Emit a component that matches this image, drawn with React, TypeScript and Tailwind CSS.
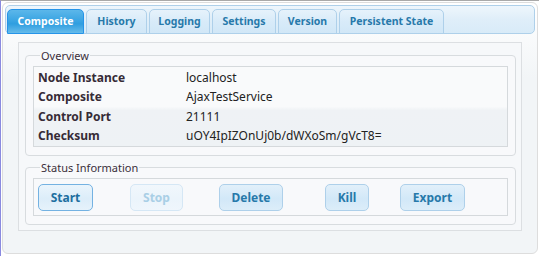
import React from "react";

const tabs = [
  { label: "Composite", w: "w-[77px]", active: true },
  { label: "History", w: "w-[61px]" },
  { label: "Logging", w: "w-[61px]" },
  { label: "Settings", w: "w-[64px]" },
  { label: "Version", w: "w-[59px]" },
  { label: "Persistent State", w: "w-[105px]" },
];

const rows = [
  ["Node Instance", "localhost"],
  ["Composite", "AjaxTestService"],
  ["Control Port", "21111"],
  ["Checksum", "uOY4IpIZOnUj0b/dWXoSm/gVcT8="],
];

function Btn({ label, cls, variant }: { label: string; cls: string; variant?: "focus" | "disabled" }) {
  const base =
    "h-[27px] rounded-[5px] border text-[12px] font-bold flex items-center justify-center shrink-0";
  const style =
    variant === "focus"
      ? "border-[#74b2e2] bg-[linear-gradient(#eaf4fc,#dcedf9_55%,#e6f2fb)] text-[#1d6fa0]"
      : variant === "disabled"
      ? "border-[#d5e7f5] bg-[linear-gradient(#f1f7fc,#ebf4fb_55%,#eff6fc)] text-[#a9cfe6]"
      : "border-[#aed0ea] bg-[linear-gradient(#e2f0fa,#d2e8f8_55%,#dcedf9)] text-[#2779aa]";
  return <div className={`${base} ${style} ${cls}`}>{label}</div>;
}

export default function App() {
  return (
    <div
      className="w-[539px] h-[256px] bg-white border-t border-t-[#a9a9a9] border-l border-l-[#8a8ae0] pt-[1px] pl-[1px] overflow-hidden"
      style={{ fontFamily: '"Noto Sans", "DejaVu Sans", sans-serif' }}
    >
      <div className="w-[536px] h-[252px] rounded-[6px] border border-[#dddddd] bg-[linear-gradient(#ffffff,#f2f5f7_30%,#f2f5f7)] p-[2px]">
        {/* tab header */}
        <div className="h-[29px] w-[530px] rounded-[5px] border border-[#aed0ea] bg-[linear-gradient(#eef6fc,#dfeef9_50%,#d8ebf8)] flex items-end gap-[2px] pl-[1px]">
          {tabs.map((t) =>
            t.active ? (
              <div
                key={t.label}
                className={`${t.w} h-[25px] mb-[-1px] rounded-t-[5px] border border-[#2694e8] bg-[linear-gradient(#5cb7ea,#3ba5e3_45%,#2f9ee0_60%,#66bbea)] text-white text-[10.5px] font-bold flex items-center justify-center`}
              >
                {t.label}
              </div>
            ) : (
              <div
                key={t.label}
                className={`${t.w} h-[25px] mb-[-1px] rounded-t-[5px] border border-[#aed0ea] bg-[linear-gradient(#e6f2fb,#d8ebf9_50%,#d1e7f7)] text-[#2779aa] text-[10.5px] font-bold flex items-center justify-center`}
              >
                {t.label}
              </div>
            )
          )}
        </div>

        {/* panel */}
        <div className="mx-[13px] mt-[8px] h-[189px] border border-[#dcdfe2] bg-[#f6f8fa] pl-[6px] pr-[5px] pt-[6px]">
          <fieldset className="border border-[#d8dcdf] rounded-[4px] bg-[#f8f9fb] px-[7px] pt-[4px] pb-[8px]">
            <legend className="ml-[7px] px-[1px] text-[11px] leading-[13px] text-[#3a2f3a]">Overview</legend>
            <div className="border border-[#d5d9dc] bg-[linear-gradient(#f9fafb,#f9fafb_50%,#eff2f5_55%,#eef2f5)] pt-[1px]">
              {rows.map(([k, v]) => (
                <div key={k} className="flex items-center h-[19.5px] text-[12px] text-[#333]">
                  <div className="w-[152px] pl-[4px] font-bold text-[#362b36]">{k}</div>
                  <div className="text-[#222]">{v}</div>
                </div>
              ))}
            </div>
          </fieldset>

          <fieldset className="mt-[5px] border border-[#d8dcdf] rounded-[4px] bg-[#f8f9fb] px-[7px] pt-[4px] pb-[8px]">
            <legend className="ml-[7px] px-[1px] text-[11px] leading-[13px] text-[#3a2f3a]">Status Information</legend>
            <div className="border border-[#d5d9dc] bg-[#f8f9fb] flex items-center h-[38px] pl-[4px] pt-[1px]">
              <Btn label="Start" cls="w-[55px]" variant="focus" />
              <Btn label="Stop" cls="w-[53px] ml-[37px]" variant="disabled" />
              <Btn label="Delete" cls="w-[64px] ml-[36px]" />
              <Btn label="Kill" cls="w-[44px] ml-[42px]" />
              <Btn label="Export" cls="w-[65px] ml-[31px]" />
            </div>
          </fieldset>
        </div>
      </div>
    </div>
  );
}
